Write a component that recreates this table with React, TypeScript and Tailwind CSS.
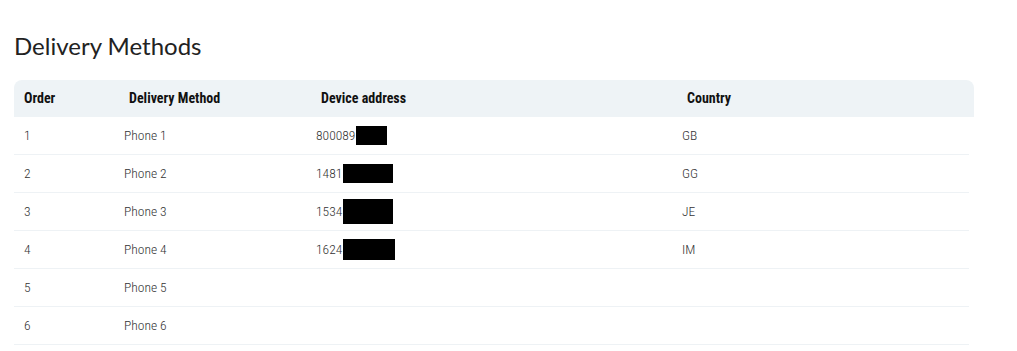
const rows = [
  { order: "1", method: "Phone 1", address: "800089", redact: "w-[31px] h-[19px]", country: "GB" },
  { order: "2", method: "Phone 2", address: "1481", redact: "w-[50px] h-[19px]", country: "GG" },
  { order: "3", method: "Phone 3", address: "1534", redact: "w-[50px] h-[25px]", country: "JE" },
  { order: "4", method: "Phone 4", address: "1624", redact: "w-[52px] h-[21px]", country: "IM" },
  { order: "5", method: "Phone 5", address: "", redact: "", country: "" },
  { order: "6", method: "Phone 6", address: "", redact: "", country: "" },
];

const cond = "font-['Roboto_Condensed','Liberation_Sans_Narrow','DejaVu_Sans_Condensed',sans-serif]";

export default function App() {
  return (
    <div className="min-h-[351px] bg-white px-[14px] pt-[31px]">
      <h1 className="font-['Lato',sans-serif] text-[24px] leading-[30px] text-[#222]">
        Delivery Methods
      </h1>

      <div className="mt-[19px] w-[960px]">
        <div
          className={`flex h-[37px] items-center rounded-t-[8px] bg-[#eef3f6] text-[14px] font-bold text-[#111] ${cond}`}
        >
          <div className="w-[100px] pl-[10px]">Order</div>
          <div className="w-[192px] pl-[15px]">Delivery Method</div>
          <div className="w-[366px] pl-[15px]">Device address</div>
          <div className="flex-1 pl-[15px]">Country</div>
        </div>

        <div className={`w-[955px] text-[13.5px] font-light text-[#333] ${cond}`}>
          {rows.map((r) => (
            <div
              key={r.order}
              className="flex h-[38px] items-center border-b border-[#eef2f5]"
            >
              <div className="w-[100px] pl-[10px]">{r.order}</div>
              <div className="w-[192px] pl-[10px]">{r.method}</div>
              <div className="flex w-[366px] items-center pl-[10px]">
                {r.address}
                {r.redact && <span className={`ml-[1px] inline-block bg-black ${r.redact}`} />}
              </div>
              <div className="flex-1 pl-[10px]">{r.country}</div>
            </div>
          ))}
        </div>
      </div>
    </div>
  );
}
